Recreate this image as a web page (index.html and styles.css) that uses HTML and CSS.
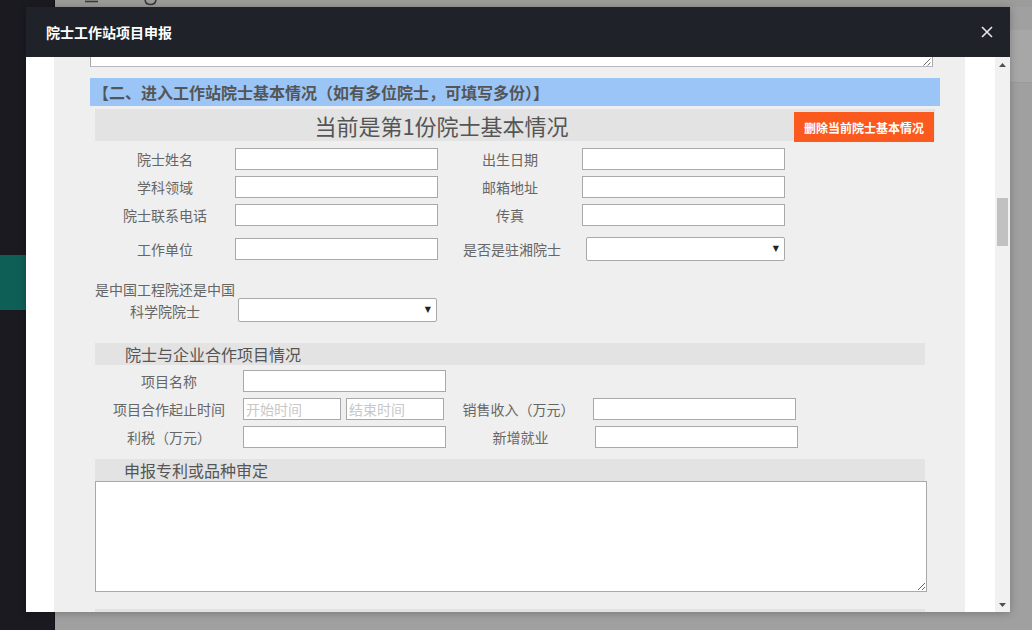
FILE: index.html
```html
<!DOCTYPE html>
<html lang="zh">
<head>
<meta charset="utf-8">
<title>院士工作站项目申报</title>
<link rel="stylesheet" href="styles.css">
</head>
<body>
<div class="page">
  <aside class="sidebar">
    <div class="side-active"></div>
  </aside>
  <main class="page-main">
    <div class="topbar">
      <svg class="tb-menu" width="13" height="7" viewBox="0 0 13 7"><path d="M0 1.5H13" stroke="#3a3a3a" stroke-width="1.6"/></svg>
      <svg class="tb-refresh" width="15" height="7" viewBox="0 0 15 7"><path d="M2 0A5.6 5.6 0 0 0 13 0" fill="none" stroke="#3a3a3a" stroke-width="1.6"/></svg>
    </div>
    <div class="page-card"></div>
  </main>
</div>

<div class="modal">
  <div class="modal-header">
    <span class="modal-title">院士工作站项目申报</span>
    <svg class="modal-close" width="12" height="12" viewBox="0 0 12 12"><path d="M1 1L11 11M11 1L1 11" stroke="#e8e8e8" stroke-width="1.6"/></svg>
  </div>
  <div class="modal-body">
    <div class="scroll-area">
      <div class="panel">
        <div class="ta-tail">
          <svg class="grip" width="9" height="8" viewBox="0 0 9 8"><path d="M8.5 0.5L1.5 7.5M8.5 4.5L5.5 7.5" stroke="#6a6a6a" stroke-width="1"/></svg>
        </div>

        <div class="sec-head">【二、进入工作站院士基本情况（如有多位院士，可填写多份）】</div>

        <div class="copy-head">
          <span class="copy-title">当前是第1份院士基本情况</span>
          <button class="btn-del">删除当前院士基本情况</button>
        </div>

        <div class="row r-first">
          <span class="lbl">院士姓名</span>
          <input class="inp" type="text">
          <span class="lbl lbl-r">出生日期</span>
          <input class="inp" type="text">
        </div>
        <div class="row r-next">
          <span class="lbl">学科领域</span>
          <input class="inp" type="text">
          <span class="lbl lbl-r">邮箱地址</span>
          <input class="inp" type="text">
        </div>
        <div class="row r-next">
          <span class="lbl">院士联系电话</span>
          <input class="inp" type="text">
          <span class="lbl lbl-r">传真</span>
          <input class="inp" type="text">
        </div>
        <div class="row r-four">
          <span class="lbl">工作单位</span>
          <input class="inp" type="text">
          <span class="lbl lbl-r2">是否是驻湘院士</span>
          <div class="sel"><span class="arrow">▼</span></div>
        </div>
        <div class="row r-five">
          <span class="lbl lbl-wrap">是中国工程院还是中国<br>科学院院士</span>
          <div class="sel sel-five"><span class="arrow">▼</span></div>
        </div>

        <div class="sub-head sub-2">院士与企业合作项目情况</div>

        <div class="row r-first2">
          <span class="lbl lbl-w">项目名称</span>
          <input class="inp" type="text">
        </div>
        <div class="row r-next">
          <span class="lbl lbl-w">项目合作起止时间</span>
          <input class="inp inp-half" type="text" placeholder="开始时间">
          <input class="inp inp-half inp-gap" type="text" placeholder="结束时间">
          <span class="lbl lbl-w2">销售收入（万元）</span>
          <input class="inp" type="text">
        </div>
        <div class="row r-next">
          <span class="lbl lbl-w">利税（万元）</span>
          <input class="inp" type="text">
          <span class="lbl lbl-w3">新增就业</span>
          <input class="inp" type="text">
        </div>

        <div class="sub-head sub-3">申报专利或品种审定</div>
        <textarea class="area"></textarea>

        <div class="sub-head sub-4">专利授权及获奖情况</div>
      </div>
    </div>
    <div class="vscroll">
      <div class="vs-btn"><svg width="7" height="4" viewBox="0 0 7 4"><path d="M0 4L3.5 0L7 4Z" fill="#505050"/></svg></div>
      <div class="vs-track"><div class="vs-thumb"></div></div>
      <div class="vs-btn"><svg width="7" height="4" viewBox="0 0 7 4"><path d="M0 0L3.5 4L7 0Z" fill="#505050"/></svg></div>
    </div>
  </div>
</div>
</body>
</html>
```

FILE: styles.css
```css
html, body {
  margin: 0;
  padding: 0;
}
body {
  width: 1032px;
  height: 630px;
  overflow: hidden;
  font-family: "Noto Sans CJK SC", "Microsoft YaHei", "Liberation Sans", sans-serif;
  background: #a0a0a0;
}

/* background page (under overlay) */
.page {
  display: flex;
  height: 630px;
}
.sidebar {
  width: 54px;
  background: #1b1a20;
  border-right: 1px solid #121115;
  padding-top: 255px;
  box-sizing: content-box;
}
.side-active {
  height: 55px;
  background: #0e6057;
}
.page-main {
  flex: 1;
  display: flex;
  flex-direction: column;
  background: #a0a0a0;
}
.topbar {
  height: 7px;
  background: #9c9c9b;
  display: flex;
  align-items: flex-start;
  padding-left: 30px;
  gap: 45px;
  overflow: hidden;
}
.page-card {
  margin-top: 23px;
  height: 52px;
  background: #a7a7a7;
  border-bottom: 1px solid #9a9a9a;
}

/* modal */
.modal {
  position: fixed;
  left: 26px;
  top: 7px;
  width: 984px;
  height: 605px;
  background: #fff;
  display: flex;
  flex-direction: column;
  box-shadow: 0 1px 8px rgba(0, 0, 0, 0.25);
}
.modal-header {
  height: 50px;
  flex: none;
  background: #1f2229;
  display: flex;
  align-items: center;
  justify-content: space-between;
  padding: 0 17px 0 20px;
}
.modal-title {
  color: #fff;
  font-size: 14px;
  font-weight: 700;
  letter-spacing: 0;
}
.modal-body {
  flex: 1;
  min-height: 0;
  display: flex;
  overflow: hidden;
}
.scroll-area {
  flex: 1;
  padding: 0 30px 0 28px;
  overflow: hidden;
}
.panel {
  height: 100%;
  background: #efefef;
  padding: 0 25px 0 36px;
  overflow: hidden;
}

/* tail of previous textarea */
.ta-tail {
  width: 843px;
  height: 10px;
  box-sizing: border-box;
  background: #fff;
  border: 1px solid #a9a9a9;
  border-top: none;
  border-bottom-color: #b8b8c4;
  display: flex;
  justify-content: flex-end;
  align-items: flex-end;
}
.grip {
  margin: 0 1px 0 0;
}

.sec-head {
  margin-top: 11px;
  height: 28px;
  line-height: 28px;
  background: #9ac5f6;
  color: #555;
  font-size: 16px;
  font-weight: 700;
  padding-left: 3px;
  white-space: nowrap;
}

.copy-head {
  margin: 3px 5px 0 5px;
  height: 32px;
  background: #e3e3e3;
  display: flex;
}
.copy-title {
  flex: 1;
  text-align: center;
  font-size: 22px;
  line-height: 32px;
  color: #555;
  padding-right: 6px;
}
.btn-del {
  width: 140px;
  height: 30px;
  align-self: flex-end;
  margin: 0 1px -1px 0;
  border: none;
  background: #fb5a1e;
  color: #fff;
  font-family: inherit;
  font-size: 12px;
  font-weight: 700;
  padding: 0;
}

/* form rows */
.row {
  display: flex;
  align-items: center;
  margin-left: 5px;
}
.r-first { margin-top: 7px; }
.r-next { margin-top: 6px; }
.r-four { margin-top: 11px; }
.r-five { margin-top: 17px; align-items: flex-end; }
.r-first2 { margin-top: 5px; }

.lbl {
  width: 140px;
  flex: none;
  text-align: center;
  font-size: 14px;
  line-height: 22px;
  color: #666;
  white-space: nowrap;
}
.lbl-r { width: 144px; }
.lbl-r2 { width: 148px; }
.lbl-wrap {
  white-space: normal;
}
.lbl-w { width: 148px; }
.lbl-w2 { width: 149px; }
.lbl-w3 { width: 149px; }

.inp {
  width: 203px;
  height: 22px;
  flex: none;
  box-sizing: border-box;
  border: 1px solid #a9a9a9;
  background: #fff;
  margin: 0;
  padding: 0 2px;
  font-family: inherit;
  font-size: 14px;
  color: #333;
  outline: none;
}
.inp-half { width: 98px; }
.inp-gap { margin-left: 5px; }
.inp::placeholder {
  color: #c8c8c8;
}

.sel {
  width: 199px;
  height: 24px;
  flex: none;
  box-sizing: border-box;
  border: 1px solid #a9a9a9;
  border-radius: 2px;
  background: #fff;
  display: flex;
  align-items: center;
  justify-content: flex-end;
  padding-right: 5px;
}
.sel-five { margin-left: 3px; }
.arrow {
  font-family: "DejaVu Sans", sans-serif;
  font-size: 8px;
  color: #222;
  line-height: 1;
}

.sub-head {
  margin: 0 15px 0 5px;
  height: 22px;
  line-height: 22px;
  background: #e3e3e3;
  color: #555;
  font-size: 16px;
  padding-left: 30px;
  white-space: nowrap;
}
.sub-2 { margin-top: 21px; }
.sub-3 { margin-top: 11px; padding-left: 29px; }
.sub-4 { margin-top: 17px; padding-left: 29px; }

.area {
  display: block;
  width: 832px;
  height: 111px;
  box-sizing: border-box;
  margin: 0 0 0 5px;
  border: 1px solid #a9a9a9;
  background: #fff;
  font-family: inherit;
  padding: 2px;
  outline: none;
}

/* scrollbar */
.vscroll {
  width: 15px;
  flex: none;
  background: #f1f1f1;
  display: flex;
  flex-direction: column;
}
.vs-btn {
  height: 15px;
  display: flex;
  align-items: center;
  justify-content: center;
}
.vs-track {
  flex: 1;
  padding: 126px 2px 0 2px;
}
.vs-thumb {
  height: 48px;
  background: #c1c1c1;
}
```
